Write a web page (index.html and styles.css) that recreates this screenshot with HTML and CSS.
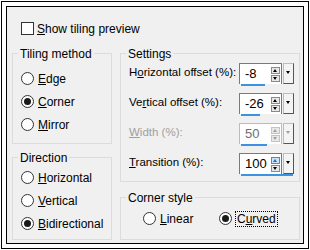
FILE: index.html
```html
<!DOCTYPE html>
<html lang="en">
  <head>
    <meta charset="UTF-8" />
    <title>Seamless tiling</title>
    <link rel="stylesheet" href="styles.css">
  </head>
  <body>
    <div class="frame">
      <div class="dialog">
        <!-- preview toggle -->
        <div class="check">
          <span class="box"></span>
          <span><u>S</u>how tiling preview</span>
        </div>

        <div class="columns">
          <div class="col">
            <div class="group group-method">
              <div class="group-title">Tiling method</div>
              <div class="options">
                <div class="opt"><span class="radio"></span><span><u>E</u>dge</span></div>
                <div class="opt"><span class="radio on"></span><span><u>C</u>orner</span></div>
                <div class="opt"><span class="radio"></span><span><u>M</u>irror</span></div>
              </div>
            </div>

            <div class="group group-direction">
              <div class="group-title">Direction</div>
              <div class="options">
                <div class="opt"><span class="radio"></span><span><u>H</u>orizontal</span></div>
                <div class="opt"><span class="radio"></span><span><u>V</u>ertical</span></div>
                <div class="opt"><span class="radio on"></span><span><u>B</u>idirectional</span></div>
              </div>
            </div>
          </div>

          <div class="col">
            <div class="group group-settings">
              <div class="group-title">Settings</div>
              <div class="rows">
                <div class="row">
                  <span class="label">H<u>o</u>rizontal offset (%):</span>
                  <div class="ctl">
                    <div class="ctl-top">
                      <div class="field">
                        <span class="value">-8</span>
                        <span class="spin"><span class="arrow up"></span><span class="arrow down"></span></span>
                      </div>
                      <span class="drop"></span>
                    </div>
                    <div class="bar"><div class="bar-fill" style="width: 46%"></div></div>
                  </div>
                </div>

                <div class="row">
                  <span class="label">Ve<u>r</u>tical offset (%):</span>
                  <div class="ctl">
                    <div class="ctl-top">
                      <div class="field">
                        <span class="value">-26</span>
                        <span class="spin"><span class="arrow up"></span><span class="arrow down"></span></span>
                      </div>
                      <span class="drop"></span>
                    </div>
                    <div class="bar"><div class="bar-fill" style="width: 37%"></div></div>
                  </div>
                </div>

                <div class="row disabled">
                  <span class="label"><u>W</u>idth (%):</span>
                  <div class="ctl">
                    <div class="ctl-top">
                      <div class="field">
                        <span class="value">50</span>
                        <span class="spin"><span class="arrow up"></span><span class="arrow down"></span></span>
                      </div>
                      <span class="drop"></span>
                    </div>
                    <div class="bar"><div class="bar-fill" style="width: 50%"></div></div>
                  </div>
                </div>

                <div class="row">
                  <span class="label"><u>T</u>ransition (%):</span>
                  <div class="ctl">
                    <div class="ctl-top">
                      <div class="field">
                        <span class="value">100</span>
                        <span class="spin"><span class="arrow up hot"></span><span class="arrow down"></span></span>
                      </div>
                      <span class="drop"></span>
                    </div>
                    <div class="bar"><div class="bar-fill" style="width: 100%"></div></div>
                  </div>
                </div>
              </div>
            </div>

            <div class="group group-corner">
              <div class="group-title">Corner style</div>
              <div class="corner-options">
                <div class="opt"><span class="radio"></span><span><u>L</u>inear</span></div>
                <div class="opt"><span class="radio on"></span><span class="focus">C<u>u</u>rved</span></div>
              </div>
            </div>
          </div>
        </div>
      </div>
    </div>
  </body>
</html>
```

FILE: styles.css
```css
body {
  margin: 0;
  background: #fff;
  color: #000;
  font: 12px/14px "Liberation Sans", Arial, sans-serif;
}
u {
  text-decoration-thickness: 1px;
  text-underline-offset: 1px;
}

/* double black outline */
.frame {
  margin: 1px;
  width: 308px;
  height: 248px;
  box-sizing: border-box;
  border: 1px solid #000;
  padding: 4px;
}
.dialog {
  height: 100%;
  box-sizing: border-box;
  border: 1px solid #000;
  background: #f0f0f0;
  padding: 0 3px 3px 5px;
}

/* checkbox */
.check {
  display: flex;
  align-items: center;
  gap: 3px;
  height: 13px;
  margin: 15px 0 0 9px;
}
.box {
  width: 13px;
  height: 13px;
  box-sizing: border-box;
  border: 1px solid #333;
  background: #fff;
}

.columns {
  display: grid;
  grid-template-columns: 100px 180px;
  column-gap: 8px;
  margin-top: 18px;
}
.col {
  display: flex;
  flex-direction: column;
  justify-content: space-between;
  height: 187px;
}

/* group boxes */
.group {
  box-sizing: border-box;
  border: 1px solid #dcdcdc;
  padding: 0 4px 0 8px;
}
.group-title {
  width: fit-content;
  margin: -7px 0 0 -3px;
  padding: 0 2px;
  background: #f0f0f0;
  line-height: 14px;
}
.group-method { height: 91px; }
.group-direction { height: 83px; }
.group-settings { height: 129px; }
.group-corner { height: 43px; }

/* radios */
.options {
  display: flex;
  flex-direction: column;
}
.group-method .options { padding-top: 6px; }
.group-direction .options { padding-top: 1px; }
.opt {
  display: flex;
  align-items: center;
  gap: 4px;
  height: 23px;
  white-space: nowrap;
}
.radio {
  position: relative;
  flex: none;
  width: 13px;
  height: 13px;
  box-sizing: border-box;
  border: 1px solid #333;
  border-radius: 50%;
  background: #fff;
}
.radio.on::after {
  content: "";
  position: absolute;
  left: 2px;
  top: 2px;
  width: 7px;
  height: 7px;
  border-radius: 50%;
  background: #1a1a1a;
}

.corner-options {
  display: flex;
  padding: 2px 0 0 14px;
}
.corner-options .opt { width: 82px; }
.focus {
  outline: 1px dotted #000;
  outline-offset: 0;
  padding: 0 1px;
}

/* settings rows */
.rows {
  display: flex;
  flex-direction: column;
  gap: 7px;
  padding-top: 2px;
}
.row {
  display: grid;
  grid-template-columns: 110px 55px;
  align-items: start;
}
.label {
  font-size: 11.5px;
  white-space: nowrap;
  margin-top: 2px;
}

.ctl {
  display: flex;
  flex-direction: column;
  width: 55px;
}
.ctl-top {
  display: flex;
  height: 21px;
}
.field {
  display: flex;
  align-items: center;
  width: 44px;
  box-sizing: border-box;
  border: 1px solid #7a7a7a;
  border-bottom: 0;
  background: #fff;
  font-size: 13px;
}
.value {
  flex: 1;
  padding-left: 5px;
}
.spin {
  display: flex;
  flex-direction: column;
  gap: 1px;
  margin-right: 1px;
}
.arrow {
  position: relative;
  width: 9px;
  height: 7px;
  box-sizing: border-box;
  border: 1px solid #8a8a8a;
  background: #e8e8e8;
}
.arrow::after {
  content: "";
  position: absolute;
  left: 1px;
  border-left: 2.5px solid transparent;
  border-right: 2.5px solid transparent;
}
.arrow.up::after {
  top: 1px;
  border-bottom: 3px solid #000;
}
.arrow.down::after {
  top: 1px;
  border-top: 3px solid #000;
}
.arrow.hot {
  background: #cce4f7;
  border-color: #3c8fd8;
}
.arrow.hot::after {
  border-bottom-color: #1d6fc4;
}
.drop {
  position: relative;
  width: 11px;
  box-sizing: border-box;
  margin-left: 1px;
  background: #f4f4f4;
  border: 1px solid #bdbdbd;
  border-right-color: #555;
  border-bottom-color: #555;
}
.drop::after {
  content: "";
  position: absolute;
  left: 2px;
  top: 7px;
  border-left: 2.5px solid transparent;
  border-right: 2.5px solid transparent;
  border-top: 3px solid #000;
}
.bar {
  width: 52px;
  height: 2px;
  margin-left: 2px;
}
.bar-fill {
  height: 2px;
  background: #3b93e4;
}

/* disabled row */
.disabled .label { color: #a0a0a0; }
.disabled .value { color: #6d6d6d; }
.disabled .field { border-color: #bcbcbc; }
.disabled .arrow { border-color: #c4c4c4; }
.disabled .arrow.up::after { border-bottom-color: #a0a0a0; }
.disabled .arrow.down::after { border-top-color: #a0a0a0; }
.disabled .drop::after { border-top-color: #a0a0a0; }
```
